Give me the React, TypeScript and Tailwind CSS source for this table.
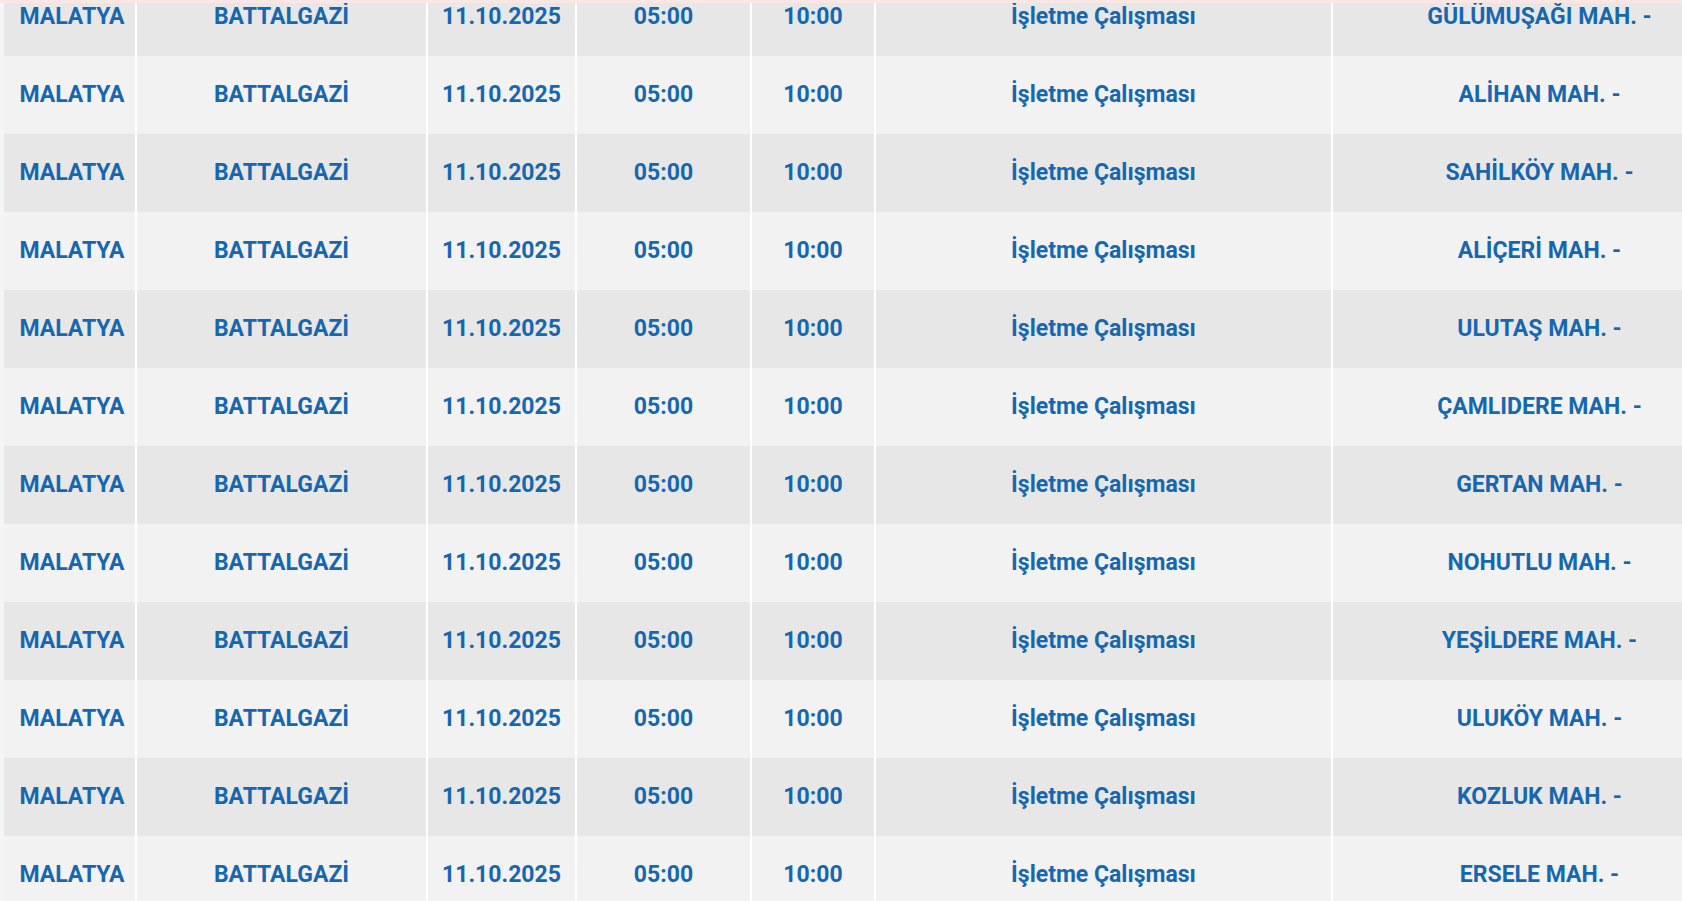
const mahalleler = [
  "GÜLÜMUŞAĞI MAH. -",
  "ALİHAN MAH. -",
  "SAHİLKÖY MAH. -",
  "ALİÇERİ MAH. -",
  "ULUTAŞ MAH. -",
  "ÇAMLIDERE MAH. -",
  "GERTAN MAH. -",
  "NOHUTLU MAH. -",
  "YEŞİLDERE MAH. -",
  "ULUKÖY MAH. -",
  "KOZLUK MAH. -",
  "ERSELE MAH. -",
];

const Row = ({ mahalle, odd }: { mahalle: string; odd: boolean }) => {
  const cell = "flex items-center justify-center border-r-2 border-white";
  return (
    <div
      className={`grid grid-cols-[133px_291px_149px_175px_124px_457px_413px] h-[78px] ${
        odd ? "bg-[#e7e7e7]" : "bg-[#f2f2f2]"
      }`}
    >
      <div className={`${cell} pl-[5px]`}>MALATYA</div>
      <div className={cell}>BATTALGAZİ</div>
      <div className={cell}>11.10.2025</div>
      <div className={cell}>05:00</div>
      <div className={cell}>10:00</div>
      <div className={cell}>İşletme Çalışması</div>
      <div className="flex items-center justify-center">{mahalle}</div>
    </div>
  );
};

export default function App() {
  return (
    <div className="relative h-[901px] w-full overflow-hidden bg-[#f3f5f7]">
      <div className="absolute left-0 right-0 top-0 z-10 h-[3px] bg-[#fbe6e6]" />
      <div
        className="ml-[4px] mt-[-22px] w-max text-[23px] font-bold text-[#1667b0]"
        style={{ fontFamily: "Roboto, 'Liberation Sans', sans-serif" }}
      >
        {mahalleler.map((m, i) => (
          <Row key={m} mahalle={m} odd={i % 2 === 0} />
        ))}
      </div>
    </div>
  );
}
